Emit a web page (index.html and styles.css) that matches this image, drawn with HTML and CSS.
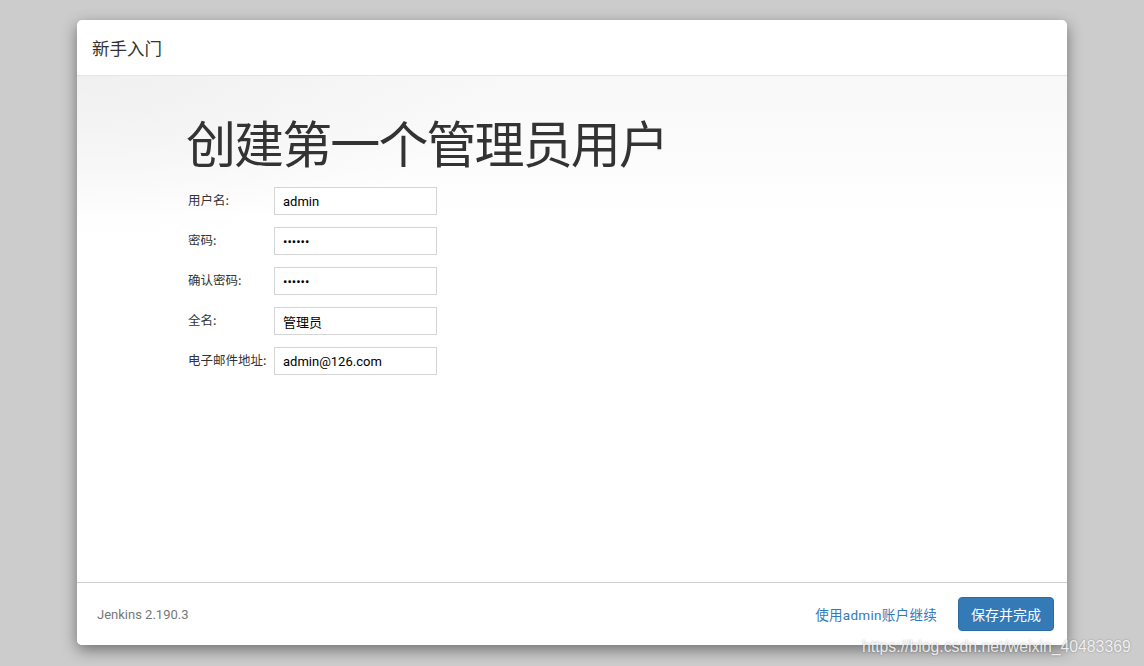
FILE: index.html
```html
<!DOCTYPE html>
<html lang="zh-CN">
<head>
<meta charset="utf-8">
<title>新手入门</title>
<link rel="stylesheet" href="styles.css">
</head>
<body>
<div class="modal">
  <div class="modal-header">新手入门</div>
  <div class="modal-body">
    <h1 class="heading">创建第一个管理员用户</h1>
    <form class="form">
      <div class="row"><label class="label">用户名:</label><input class="field" type="text" value="admin"></div>
      <div class="row"><label class="label">密码:</label><input class="field" type="password" value="123456"></div>
      <div class="row"><label class="label">确认密码:</label><input class="field" type="password" value="123456"></div>
      <div class="row"><label class="label">全名:</label><input class="field" type="text" value="管理员"></div>
      <div class="row"><label class="label">电子邮件地址:</label><input class="field" type="text" value="admin@126.com"></div>
    </form>
  </div>
  <div class="modal-footer">
    <span class="version">Jenkins 2.190.3</span>
    <div class="actions">
      <a class="link" href="#">使用admin账户继续</a>
      <button class="btn" type="button">保存并完成</button>
    </div>
  </div>
</div>
<div class="watermark">https://blog.csdn.net/weixin_40483369</div>
</body>
</html>
```

FILE: styles.css
```css
html, body {
  margin: 0;
  padding: 0;
}
body {
  background: #cccccc;
  font-family: Roboto, "Noto Sans CJK SC", "Liberation Sans", sans-serif;
  color: #333;
  padding: 20px 0 0 77px;
  height: 666px;
  box-sizing: border-box;
  position: relative;
  overflow: hidden;
}
.modal {
  width: 990px;
  height: 625px;
  background: #fff;
  border-radius: 5px;
  box-shadow: 0 5px 15px rgba(0, 0, 0, 0.45);
  display: flex;
  flex-direction: column;
  overflow: hidden;
}
.modal-header {
  height: 55px;
  border-bottom: 1px solid #e5e5e5;
  padding-left: 15px;
  display: flex;
  align-items: center;
  font-size: 17.5px;
  color: #333;
  font-family: "Noto Sans CJK SC", sans-serif;
  flex: none;
}
.modal-body {
  flex: 1;
  background:
    radial-gradient(ellipse 420px 160px at 0 0, rgba(238, 238, 238, 0.8), rgba(255, 255, 255, 0)),
    linear-gradient(to bottom, #f8f8f8 0px, #fbfbfb 70px, #ffffff 140px);
  padding: 31px 0 0 109px;
}
.heading {
  margin: 0 0 12px 0;
  font-family: "Noto Sans CJK SC", sans-serif;
  font-weight: 400;
  font-size: 50px;
  letter-spacing: -1.9px;
  line-height: 68px;
  color: #333;
}
.form {
  display: flex;
  flex-direction: column;
  gap: 12px;
  padding-left: 2px;
}
.row {
  display: flex;
  align-items: center;
  height: 28px;
}
.label {
  width: 86px;
  font-size: 12.5px;
  color: #333;
  font-family: "Noto Sans CJK SC", sans-serif;
  margin-top: -4px;
}
.field {
  width: 163px;
  height: 28px;
  box-sizing: border-box;
  border: 1px solid #d5d5d5;
  padding: 0 8px;
  font-size: 13px;
  font-family: Roboto, "Noto Sans CJK SC", sans-serif;
  color: #000;
  background: #fff;
  margin: 0;
}
.modal-footer {
  flex: none;
  height: 62px;
  border-top: 1px solid #d0d0d0;
  display: flex;
  align-items: center;
  justify-content: space-between;
  padding: 0 13px 0 20px;
  background: #fff;
}
.version {
  font-size: 13px;
  color: #777;
}
.actions {
  display: flex;
  align-items: center;
  gap: 21px;
}
.link {
  color: #337ab7;
  text-decoration: none;
  font-size: 13.5px;
  letter-spacing: 0.3px;
}
.btn {
  width: 96px;
  height: 34px;
  border: 1px solid #2e6da4;
  border-radius: 4px;
  background: #337ab7;
  color: #fff;
  font-size: 14px;
  font-family: "Noto Sans CJK SC", sans-serif;
  font-weight: 400;
  padding: 0;
}
.watermark {
  position: absolute;
  left: 862px;
  top: 638px;
  font-family: "Liberation Sans", Arial, sans-serif;
  font-size: 15.8px;
  color: rgba(255, 255, 255, 0.85);
  text-shadow: 0 0 2px rgba(0, 0, 0, 0.35);
  white-space: nowrap;
}
```
